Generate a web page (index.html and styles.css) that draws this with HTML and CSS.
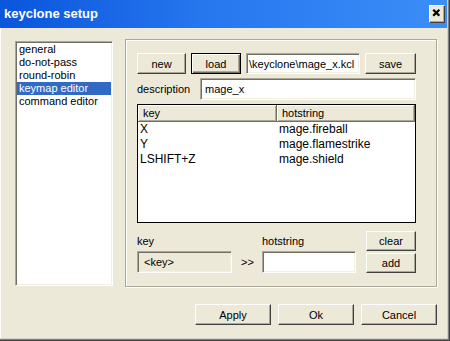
FILE: index.html
```html
<!DOCTYPE html>
<html>
<head>
<meta charset="utf-8">
<title>keyclone setup</title>
<link rel="stylesheet" href="styles.css">
</head>
<body>
<div class="window">
  <div class="titlebar">
    <span class="title">keyclone setup</span>
    <div class="close">
      <svg width="16" height="18" viewBox="0 0 16 18"><path d="M4.5 5.5 L11 12 M11 5.5 L4.5 12" stroke="#000" stroke-width="2.4" fill="none"/></svg>
    </div>
  </div>
  <div class="main">
    <ul class="nav">
      <li>general</li>
      <li>do-not-pass</li>
      <li>round-robin</li>
      <li class="sel">keymap editor</li>
      <li>command editor</li>
    </ul>
    <div class="group">
      <div class="row1">
        <div class="btn w-new">new</div>
        <div class="btn default w-load">load</div>
        <div class="field path">\keyclone\mage_x.kcl</div>
        <div class="btn w-save">save</div>
      </div>
      <div class="row2">
        <span class="desc-label">description</span>
        <div class="field desc">mage_x</div>
      </div>
      <div class="listview">
        <div class="lv-head">
          <div class="hcell c1">key</div>
          <div class="hcell c2">hotstring</div>
        </div>
        <div class="lv-row"><span class="c1">X</span><span class="c2">mage.fireball</span></div>
        <div class="lv-row"><span class="c1">Y</span><span class="c2">mage.flamestrike</span></div>
        <div class="lv-row"><span class="c1">LSHIFT+Z</span><span class="c2">mage.shield</span></div>
      </div>
      <div class="editor">
        <span class="lbl lbl-key">key</span>
        <span class="lbl lbl-hot">hotstring</span>
        <div class="btn small b-clear">clear</div>
        <div class="field disabled f-key">&lt;key&gt;</div>
        <span class="arrow">&gt;&gt;</span>
        <div class="field f-hot"></div>
        <div class="btn small b-add">add</div>
      </div>
    </div>
  </div>
  <div class="footer">
    <div class="btn wide">Apply</div>
    <div class="btn wide">Ok</div>
    <div class="btn wide">Cancel</div>
  </div>
</div>
</body>
</html>
```
FILE: styles.css
```css
* { box-sizing: border-box; margin: 0; padding: 0; }
body {
  margin: 0;
  font-family: "Liberation Sans", Arial, sans-serif;
  font-size: 11px;
  color: #000;
  background: #ECE9D8;
}
.window {
  width: 450px;
  height: 341px;
  background: #ECE9D8;
  padding: 0 3px 3px 0;
  box-shadow: inset -1px -1px 0 #404040, inset -2px -2px 0 #808080, inset -3px -3px 0 #D4D0C8, inset 1px 0 0 #fff;
}
.titlebar {
  height: 28px;
  background: linear-gradient(to right, #0A55DC 0%, #2676EE 45%, #3B8EF8 100%);
  display: flex;
  align-items: center;
  justify-content: space-between;
  padding: 0 2px 0 4px;
}
.title {
  color: #fff;
  font-weight: bold;
  font-size: 13px;
  margin-top: -1px;
}
.close {
  width: 16px;
  height: 18px;
  margin-top: -1px;
  background: #ECE9D8;
  border: 1px solid;
  border-color: #fff #404040 #404040 #fff;
  box-shadow: inset -1px -1px 0 #ACA899;
  display: flex;
  align-items: center;
  justify-content: center;
}
.close svg { display: block; margin: -1px 0 0 -1px; }
.main {
  display: flex;
  gap: 12px;
  padding: 11px 0 0 15px;
}
.nav {
  list-style: none;
  width: 98px;
  height: 245px;
  margin-top: 2px;
  background: #fff;
  border: 1px solid;
  border-color: #ACA899 #fff #fff #ACA899;
  box-shadow: inset 1px 1px 0 #716F64, inset -1px -1px 0 #F1EFE2;
  padding: 1px;
}
.nav li {
  height: 13px;
  line-height: 13px;
  padding-left: 2px;
  white-space: nowrap;
}
.nav li.sel { background: #316AC5; color: #fff; }
.group {
  width: 312px;
  height: 248px;
  border: 1px solid #ACA899;
  box-shadow: inset 1px 1px 0 #fff, 1px 1px 0 #fff;
  padding: 13px 20px 0 11px;
  display: flex;
  flex-direction: column;
}
.btn {
  height: 21px;
  background: #ECE9D8;
  border: 1px solid;
  border-color: #fff #404040 #404040 #fff;
  box-shadow: inset -1px -1px 0 #ACA899;
  display: flex;
  align-items: center;
  justify-content: center;
  white-space: nowrap;
}
.btn.default {
  border: 1px solid #000;
  box-shadow: inset 1px 1px 0 #fff, inset -1px -1px 0 #716F64, inset -2px -2px 0 #ACA899;
}
.row1 { display: flex; gap: 5px; height: 21px; }
.w-new { width: 49px; }
.w-load { width: 50px; }
.w-save { width: 51px; }
.field {
  background: #fff;
  border: 1px solid;
  border-color: #ACA899 #fff #fff #ACA899;
  box-shadow: inset 1px 1px 0 #716F64, inset -1px -1px 0 #F1EFE2;
  height: 22px;
  padding: 0 4px;
  display: flex;
  align-items: center;
  white-space: nowrap;
  overflow: hidden;
}
.path { width: 114px; height: 21px; padding: 0 0 0 2px; }
.row2 {
  display: flex;
  align-items: center;
  margin-top: 4px;
  height: 22px;
}
.desc-label { width: 63px; }
.desc { flex: 1; }
.listview {
  margin-top: 4px;
  height: 119px;
  border: 1px solid #000;
  background: #fff;
}
.lv-head { display: flex; height: 17px; }
.hcell {
  background: #ECE9D8;
  border-right: 1px solid #716F64;
  border-bottom: 1px solid #716F64;
  box-shadow: inset 1px 1px 0 #fff, inset -1px -1px 0 #ACA899;
  padding-left: 5px;
  display: flex;
  align-items: center;
}
.lv-head .c1 { width: 139px; }
.lv-head .c2 { width: 138px; }
.lv-row {
  display: flex;
  height: 15px;
  line-height: 15px;
  font-size: 12px;
}
.lv-row .c1 { width: 139px; padding-left: 2px; }
.lv-row .c2 { padding-left: 2px; }
.editor {
  margin-top: 8px;
  display: grid;
  grid-template-columns: 95px 30px 94px 10px 50px;
  grid-template-rows: 20px 22px;
}
.lbl { align-self: center; }
.lbl-key { grid-column: 1; grid-row: 1; }
.lbl-hot { grid-column: 3; grid-row: 1; }
.small { height: 20px; }
.b-clear { grid-column: 5; grid-row: 1; }
.b-add { grid-column: 5; grid-row: 2; margin-top: 2px; }
.f-key { grid-column: 1; grid-row: 2; padding-left: 6px; }
.disabled { background: #ECE9D8; }
.arrow { grid-column: 2; grid-row: 2; align-self: center; padding-left: 9px; }
.f-hot { grid-column: 3; grid-row: 2; }
.footer {
  display: flex;
  justify-content: flex-end;
  gap: 7px;
  margin-top: 17px;
  padding-right: 10px;
}
.wide { width: 76px; }
```
